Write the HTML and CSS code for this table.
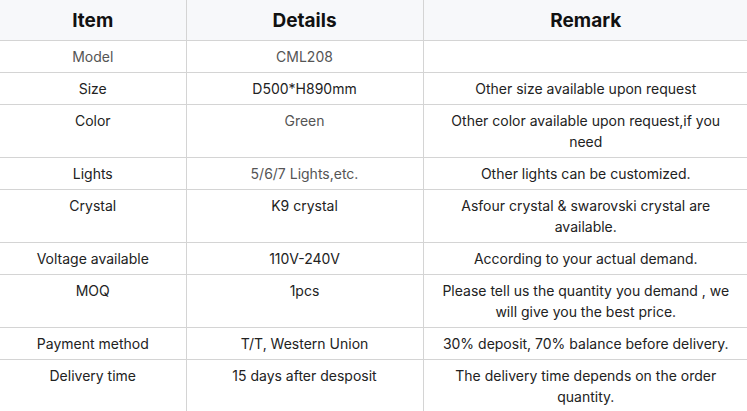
FILE: index.html
```html
<!DOCTYPE html>
<html>
<head>
<meta charset="utf-8">
<link rel="stylesheet" href="styles.css">
</head>
<body>
<table class="spec">
  <colgroup>
    <col class="c1"><col class="c2"><col class="c3">
  </colgroup>
  <thead>
    <tr><th>Item</th><th>Details</th><th>Remark</th></tr>
  </thead>
  <tbody>
    <tr class="muted"><td>Model</td><td>CML208</td><td></td></tr>
    <tr><td>Size</td><td>D500*H890mm</td><td>Other size available upon request</td></tr>
    <tr><td>Color</td><td class="muted">Green</td><td>Other color available upon request,if you need</td></tr>
    <tr><td>Lights</td><td class="muted">5/6/7 Lights,etc.</td><td>Other lights can be customized.</td></tr>
    <tr><td>Crystal</td><td>K9 crystal</td><td>Asfour crystal &amp; swarovski crystal are available.</td></tr>
    <tr><td>Voltage available</td><td>110V-240V</td><td>According to your actual demand.</td></tr>
    <tr><td>MOQ</td><td>1pcs</td><td>Please tell us the quantity you demand , we will give you the best price.</td></tr>
    <tr><td>Payment method</td><td>T/T, Western Union</td><td>30% deposit, 70% balance before delivery.</td></tr>
    <tr><td>Delivery time</td><td>15 days after desposit</td><td>The delivery time depends on the order quantity.</td></tr>
  </tbody>
</table>
</body>
</html>
```
FILE: styles.css
```css
html, body {
  margin: 0;
  padding: 0;
  background: #ffffff;
}
.spec {
  border-collapse: collapse;
  table-layout: fixed;
  width: 748px;
  font-family: Inter, "Liberation Sans", sans-serif;
  font-size: 14px;
  line-height: 21px;
  color: #222;
}
.c1 { width: 186px; }
.c2 { width: 237px; }
.c3 { width: 325px; }
.spec th {
  background: #f7f8fa;
  font-size: 19px;
  font-weight: 700;
  color: #111;
  height: 40px;
  padding: 0;
  text-align: center;
  vertical-align: middle;
  border-bottom: 1px solid #d4d4d4;
}
.spec th + th,
.spec td + td {
  border-left: 1px solid #d4d4d4;
}
.spec td {
  text-align: center;
  vertical-align: top;
  padding: 5px 12px 5px;
  border-bottom: 1px solid #d4d4d4;
}
.spec tr.muted td,
.spec td.muted {
  color: #555;
}
```
